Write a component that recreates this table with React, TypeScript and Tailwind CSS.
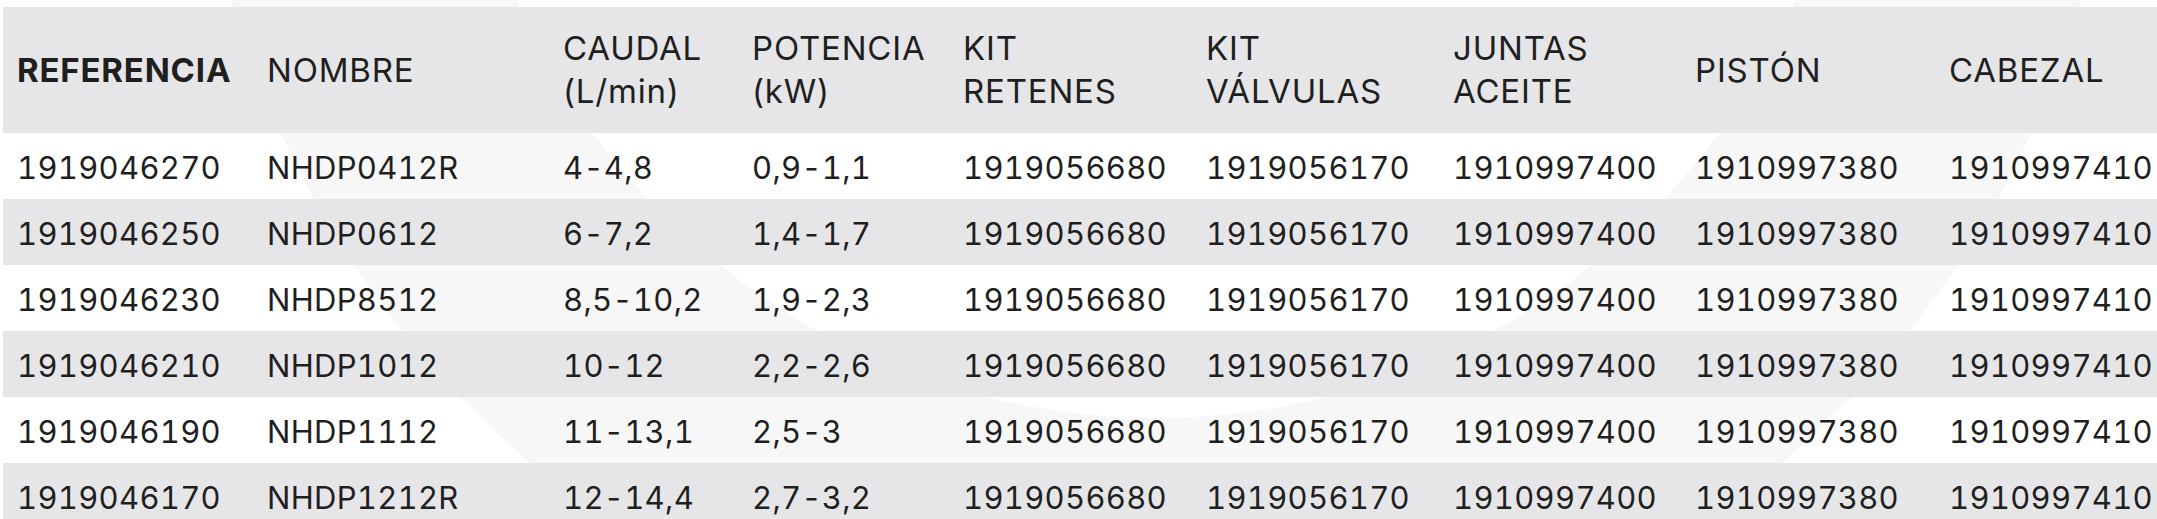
import React from "react";

const headers: { label: React.ReactNode; bold?: boolean }[] = [
  { label: "REFERENCIA", bold: true },
  { label: "NOMBRE" },
  { label: <>CAUDAL<br />(L/min)</> },
  { label: <>POTENCIA<br />(kW)</> },
  { label: <>KIT<br />RETENES</> },
  { label: <>KIT<br />VÁLVULAS</> },
  { label: <>JUNTAS<br />ACEITE</> },
  { label: "PISTÓN" },
  { label: "CABEZAL" },
];

const rows = [
  ["1919046270", "NHDP0412R", "4-4,8", "0,9-1,1"],
  ["1919046250", "NHDP0612", "6-7,2", "1,4-1,7"],
  ["1919046230", "NHDP8512", "8,5-10,2", "1,9-2,3"],
  ["1919046210", "NHDP1012", "10-12", "2,2-2,6"],
  ["1919046190", "NHDP1112", "11-13,1", "2,5-3"],
  ["1919046170", "NHDP1212R", "12-14,4", "2,7-3,2"],
];

const parts = ["1919056680", "1919056170", "1910997400", "1910997380", "1910997410"];

const widths = [250, 296, 189, 211, 243, 247, 242, 254, 240];

const Watermark = () => (
  <svg
    className="absolute inset-0 pointer-events-none"
    width="2157"
    height="519"
    viewBox="0 0 2157 519"
  >
    <path
      fill="#f7f7f7"
      fillRule="evenodd"
      d="M193 -269 a963 963 0 1 0 1926 0 a963 963 0 1 0 -1926 0 Z M457 -281 a699 699 0 1 0 1398 0 a699 699 0 1 0 -1398 0 Z"
    />
  </svg>
);

export default function App() {
  return (
    <div className="relative w-[2157px] h-[519px] overflow-hidden bg-white font-['Inter',sans-serif] text-[#1f1f1f]">
      <Watermark />
      <table className="relative ml-[3px] mt-[7px] table-fixed border-collapse w-[2172px]">
        <colgroup>
          {widths.map((w, i) => (
            <col key={i} style={{ width: w }} />
          ))}
        </colgroup>
        <thead>
          <tr className="h-[126px] bg-[#e6e6e9]">
            {headers.map((h, i) => (
              <th
                key={i}
                className={`pl-[14px] text-left align-middle text-[33px] leading-[43px] tracking-[0.8px] whitespace-nowrap ${
                  h.bold ? "font-bold" : "font-normal"
                }`}
              >
                {h.label}
              </th>
            ))}
          </tr>
        </thead>
        <tbody>
          {rows.map((r, i) => (
            <tr key={r[0]} className={`h-[66px] ${i % 2 === 1 ? "bg-[#e6e6e9]" : ""}`}>
              {[...r, ...parts].map((c, j) => (
                <td
                  key={j}
                  className="pl-[14px] pt-[4px] align-middle text-[31px] leading-[40px] tracking-[0.3px] tabular-nums whitespace-nowrap"
                >
                  {c}
                </td>
              ))}
            </tr>
          ))}
        </tbody>
      </table>
    </div>
  );
}
